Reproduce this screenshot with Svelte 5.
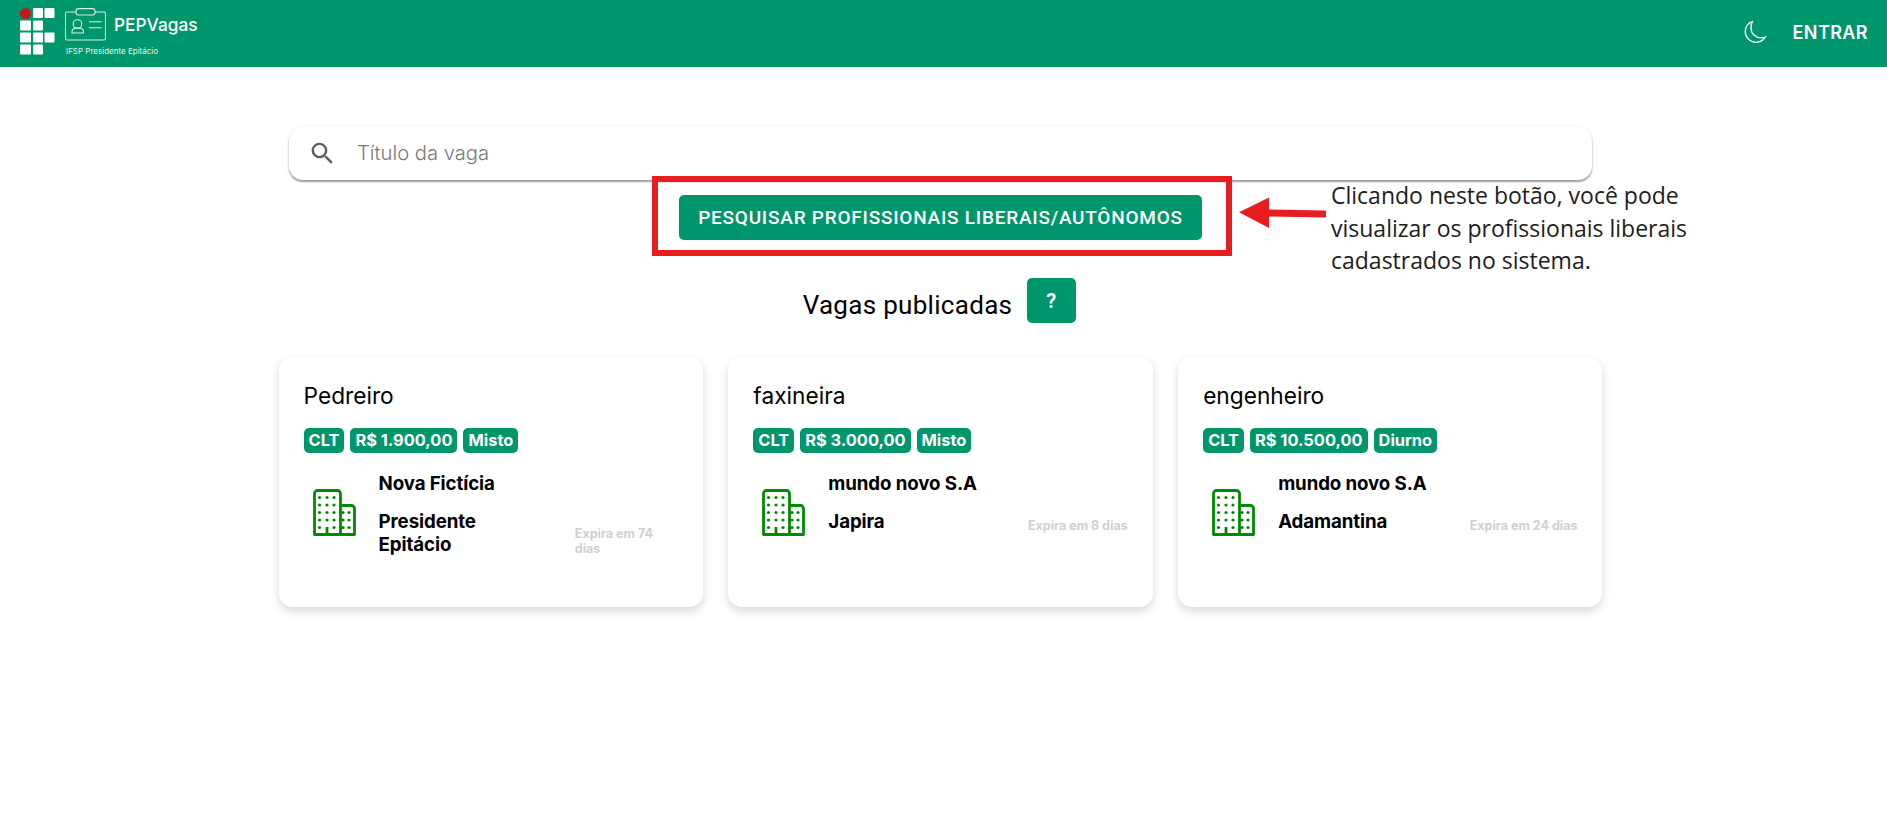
<script>
  const jobs = [
    { title: 'Pedreiro', tags: ['CLT', 'R$ 1.900,00', 'Misto'], company: 'Nova Fictícia', city: 'Presidente Epitácio', expires: 'Expira em 74 dias', narrow: true },
    { title: 'faxineira', tags: ['CLT', 'R$ 3.000,00', 'Misto'], company: 'mundo novo S.A', city: 'Japira', expires: 'Expira em 8 dias' },
    { title: 'engenheiro', tags: ['CLT', 'R$ 10.500,00', 'Diurno'], company: 'mundo novo S.A', city: 'Adamantina', expires: 'Expira em 24 dias' }
  ];
  const dots = [];
  for (const y of [8.5, 16, 23.5, 31, 38.5]) for (const x of [6.5, 14, 21]) if (!(y === 38.5 && x === 14)) dots.push([x, y]);
  for (const y of [23.5, 31, 38.5]) for (const x of [30, 36]) dots.push([x, y]);
</script>

<header class="topbar">
  <div class="brand">
    <svg class="ifsp" width="35" height="47" viewBox="0 0 35 47" aria-hidden="true">
      <circle cx="5.500" cy="5.500" r="5.500" fill="#c8161d" />
      <rect x="13" y="0" width="10" height="10" rx="1" fill="#fff" />
      <rect x="24.500" y="0" width="10" height="10" rx="1" fill="#fff" />
      <rect x="0" y="12.500" width="11" height="10" rx="1" fill="#fff" />
      <rect x="13" y="12.500" width="10" height="10" rx="1" fill="#fff" />
      <rect x="0" y="24.500" width="11" height="10" rx="1" fill="#fff" />
      <rect x="13" y="24.500" width="10" height="10" rx="1" fill="#fff" />
      <rect x="24.500" y="24.500" width="10" height="10" rx="1" fill="#fff" />
      <rect x="0" y="36.500" width="11" height="10" rx="1" fill="#fff" />
      <rect x="13" y="36.500" width="10" height="10" rx="1" fill="#fff" />
    </svg>
    <div class="wordmark">
      <div class="wordline">
        <svg width="41" height="33" viewBox="0 0 41 33" fill="none" stroke="#d5efe4" stroke-width="1.100" aria-hidden="true">
          <path d="M11 4H2A1.500 1.500 0 0 0 .5 5.500V30.500A1.500 1.500 0 0 0 2 32H39A1.500 1.500 0 0 0 40.500 30.500V5.500A1.500 1.500 0 0 0 39 4H30" />
          <rect x="11" y=".6" width="19" height="6.400" rx="2.500" />
          <circle cx="12.500" cy="16" r="4.300" />
          <path d="M7 25.500V24C7 21.500 9 20.500 12.500 20.500S18.500 21.500 18.500 24V25.500Z" transform="translate(0 -.5)" />
          <path d="M24 13.700H36.500M24 19.700H36.500" />
        </svg>
        <span class="name">PEPVagas</span>
      </div>
      <span class="campus">IFSP Presidente Epitácio</span>
    </div>
  </div>
  <div class="actions">
    <svg width="26" height="26" viewBox="0 0 24 24" fill="none" stroke="#fff" stroke-width="1.200" aria-hidden="true">
      <path d="M9.500 2.500C6 3.500 3 7 3 11.500C3 17 7.500 21.500 13 21.500C16.500 21.500 19.800 19.500 21.500 16.800C20.300 17.200 19 17.400 17.700 17.400C12.500 17.400 8.300 13.400 8.300 8.200C8.300 6.200 8.700 4.200 9.500 2.500Z" />
    </svg>
    <span class="login">ENTRAR</span>
  </div>
</header>

<main class="page">
  <div class="search">
    <svg width="29" height="29" viewBox="0 0 24 24" fill="#5f5f5f" aria-hidden="true">
      <path d="M15.500 14h-.79l-.28-.27A6.470 6.470 0 0 0 16 9.500 6.500 6.500 0 1 0 9.500 16c1.610 0 3.090-.59 4.230-1.570l.27.28v.79l5 4.990L20.490 19l-4.990-5zm-6 0C7.010 14 5 11.990 5 9.500S7.010 5 9.500 5 14 7.010 14 9.500 11.990 14 9.500 14z" />
    </svg>
    <span class="placeholder">Título da vaga</span>
  </div>

  <button class="primary">PESQUISAR PROFISSIONAIS LIBERAIS/AUTÔNOMOS</button>

  <div class="heading">
    <h2>Vagas publicadas</h2>
    <button class="help">?</button>
  </div>

  <section class="cards">
    {#each jobs as job}
      <article class="card">
        <h3>{job.title}</h3>
        <div class="tags">
          {#each job.tags as tag}<span class="tag">{tag}</span>{/each}
        </div>
        <div class="details">
          <svg class="building" width="43" height="47" viewBox="0 0 43 47" fill="none" aria-hidden="true">
            <path d="M1.500 45.500V4.500A3 3 0 0 1 4.500 1.500H24.500A3 3 0 0 1 27.500 4.500V45.500ZM27.500 16.500H38.500A3 3 0 0 1 41.500 19.500V45.500H27.500M14 45.500V38" stroke="#008a00" stroke-width="2.800" stroke-linejoin="round" />
            {#each dots as d}<circle cx={d[0]} cy={d[1]} r="1.600" fill="#008a00" />{/each}
          </svg>
          <div class="where" class:narrow={job.narrow}>
            <p>{job.company}</p>
            <p>{job.city}</p>
          </div>
          <span class="expires" class:wrap={job.narrow}>{job.expires}</span>
        </div>
      </article>
    {/each}
  </section>

  <div class="callout">
    <div class="box"></div>
    <svg class="arrow" width="88" height="32" viewBox="0 0 88 32" aria-hidden="true">
      <path d="M0 15.300L30 .5V12.500L87 13.500V20.500L30 19.500V31Z" fill="#e71d1f" />
    </svg>
    <p class="note">Clicando neste botão, você pode<br />visualizar os profissionais liberais<br />cadastrados no sistema.</p>
  </div>
</main>

<style>
  :global(body) {
    margin: 0;
    background: #fff;
    font-family: Inter, "Liberation Sans", sans-serif;
    color: #000;
  }
  .topbar {
    box-sizing: border-box;
    height: 67px;
    background: #00966b;
    display: flex;
    align-items: flex-start;
    justify-content: space-between;
    padding: 8px 19px 0 20px;
    color: #fff;
  }
  .brand {
    display: flex;
    gap: 10px;
    align-items: flex-start;
  }
  .ifsp {
    display: block;
  }
  .wordmark {
    display: flex;
    flex-direction: column;
    gap: 5px;
  }
  .wordline {
    display: flex;
    align-items: center;
    gap: 8px;
  }
  .wordline svg {
    display: block;
  }
  .name {
    font-size: 17.300px;
    font-weight: 500;
  }
  .campus {
    font-size: 8px;
    line-height: 10px;
    margin-left: 1px;
    color: #e6f5ef;
  }
  .actions {
    height: 48px;
    display: flex;
    align-items: center;
    gap: 25px;
  }
  .login {
    font-size: 18px;
    font-weight: 600;
    letter-spacing: 0.4px;
  }
  .page {
    position: relative;
    box-sizing: border-box;
    width: 1881px;
    min-height: 770px;
    display: flex;
    flex-direction: column;
    align-items: center;
    padding-top: 60px;
  }
  .search {
    box-sizing: border-box;
    width: 1303px;
    height: 53px;
    background: #fff;
    border-radius: 14px;
    display: flex;
    align-items: center;
    gap: 20px;
    padding-left: 19px;
    box-shadow: 0 2px 2px rgba(0, 0, 0, 0.38), 0 0 5px rgba(0, 0, 0, 0.06);
  }
  .placeholder {
    font-size: 20.200px;
    font-weight: 300;
    color: #7a7a7a;
    margin-top: -2px;
  }
  .primary {
    margin-top: 15px;
    width: 523px;
    height: 45px;
    border: 0;
    border-radius: 5px;
    background: #00966b;
    color: #fff;
    font-family: Roboto, sans-serif;
    font-size: 19px;
    font-weight: 500;
    letter-spacing: 0.76px;
    padding: 0;
  }
  .heading {
    margin: 38px 0 0 -2px;
    display: flex;
    align-items: center;
    gap: 15px;
    height: 45px;
  }
  h2 {
    margin: 8px 0 0;
    font-family: Roboto, sans-serif;
    font-size: 26px;
    font-weight: 400;
    letter-spacing: 0.3px;
  }
  .help {
    width: 49px;
    height: 45px;
    border: 0;
    border-radius: 5px;
    background: #00966b;
    color: #fff;
    font-family: Roboto, sans-serif;
    font-size: 20px;
    font-weight: 700;
    padding: 0 1px 0 0;
  }
  .cards {
    margin-top: 34px;
    display: flex;
    gap: 25.500px;
  }
  .card {
    box-sizing: border-box;
    width: 424.300px;
    height: 250px;
    border-radius: 14px;
    background: #fff;
    padding: 24px 25px;
    box-shadow: 0 4px 10px rgba(0, 0, 0, 0.16);
  }
  h3 {
    margin: 0;
    font-size: 22.700px;
    font-weight: 400;
    line-height: 29px;
  }
  .tags {
    display: flex;
    gap: 6px;
    margin-top: 18px;
  }
  .tag {
    background: #00966b;
    color: #fff;
    font-size: 16.400px;
    font-weight: 700;
    line-height: 25px;
    padding: 0 5px;
    border-radius: 5px;
  }
  .details {
    display: flex;
    align-items: flex-start;
    margin-top: 19px;
  }
  .building {
    flex: none;
    margin: 17px 0 0 9px;
  }
  .where {
    margin-left: 23px;
    width: 200px;
  }
  .where.narrow {
    width: 135px;
  }
  .where p {
    margin: 0 0 15px;
    font-size: 18.700px;
    font-weight: 700;
    line-height: 23px;
    letter-spacing: -0.1px;
  }
  .expires {
    margin: 0 0 15px auto;
    align-self: flex-end;
    font-size: 12.500px;
    font-weight: 700;
    color: #d0d0d0;
    line-height: 15px;
    white-space: nowrap;
  }
  .expires.wrap {
    width: 103px;
    white-space: normal;
  }
  .callout {
    position: absolute;
    inset: 0;
    pointer-events: none;
  }
  .box {
    position: absolute;
    left: 652px;
    top: 109px;
    width: 580px;
    height: 80px;
    box-sizing: border-box;
    border: 6px solid #e71d1f;
  }
  .arrow {
    position: absolute;
    left: 1239px;
    top: 130px;
  }
  .note {
    position: absolute;
    left: 1331px;
    top: 112px;
    margin: 0;
    font-family: "Open Sans", sans-serif;
    font-size: 23px;
    line-height: 32.500px;
    color: #1d1d1d;
  }
</style>
